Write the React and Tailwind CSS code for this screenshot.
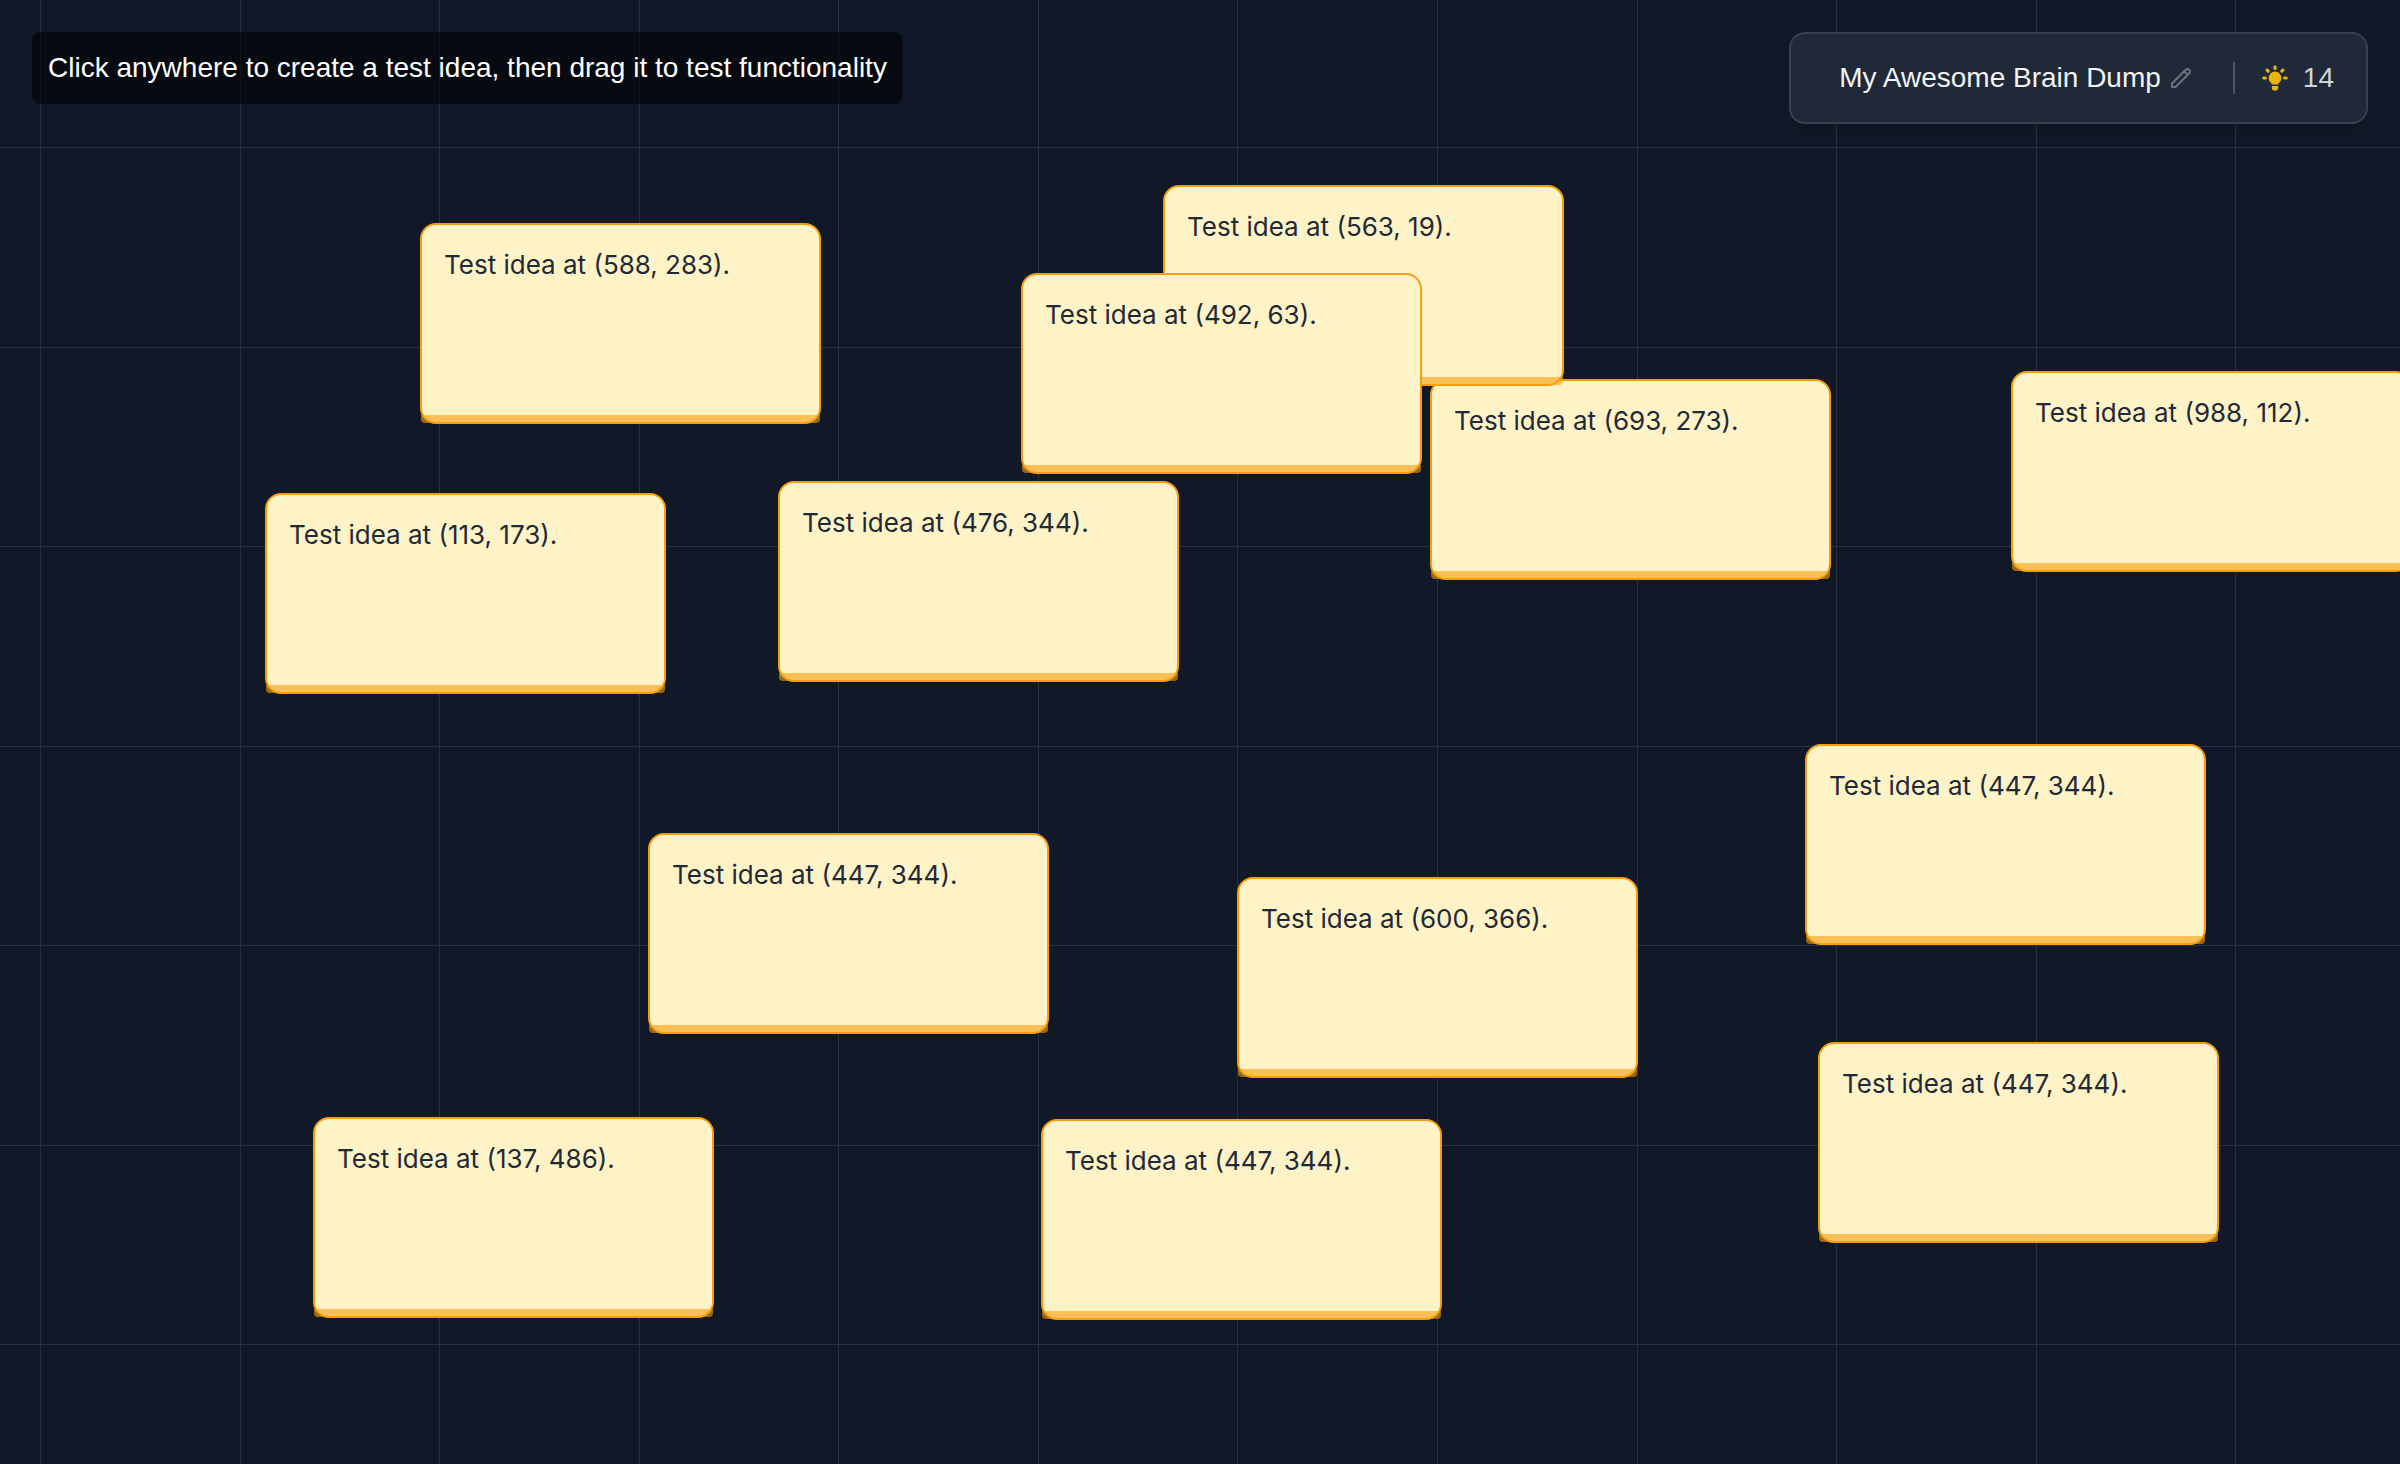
const COLUMNS = [40, 240, 439, 639, 838, 1038, 1237, 1437, 1637, 1836, 2036, 2235];
const ROWS = [147, 347, 546, 746, 945, 1145, 1344];

const IDEAS = [
  { x: 420, y: 223, text: "Test idea at (588, 283)." },
  { x: 1430, y: 379, text: "Test idea at (693, 273)." },
  { x: 1163, y: 185, text: "Test idea at (563, 19)." },
  { x: 1021, y: 273, text: "Test idea at (492, 63)." },
  { x: 2011, y: 371, text: "Test idea at (988, 112)." },
  { x: 265, y: 493, text: "Test idea at (113, 173)." },
  { x: 778, y: 481, text: "Test idea at (476, 344)." },
  { x: 1805, y: 744, text: "Test idea at (447, 344)." },
  { x: 648, y: 833, text: "Test idea at (447, 344)." },
  { x: 1237, y: 877, text: "Test idea at (600, 366)." },
  { x: 1818, y: 1042, text: "Test idea at (447, 344)." },
  { x: 313, y: 1117, text: "Test idea at (137, 486)." },
  { x: 1041, y: 1119, text: "Test idea at (447, 344)." },
];

function Grid() {
  return (
    <svg className="absolute inset-0 h-full w-full" aria-hidden="true">
      {COLUMNS.map((x) => (
        <rect key={x} x={x} y="0" width="1" height="100%" fill="#29313f" />
      ))}
      {ROWS.map((y) => (
        <rect key={y} x="0" y={y} width="100%" height="1" fill="#29313f" />
      ))}
    </svg>
  );
}

function IdeaCard({ x, y, text }) {
  return (
    <article className="absolute h-[201px] w-[401px]" style={{ left: x, top: y }}>
      <div className="h-full rounded-2xl border-2 border-[#f59e0b] bg-[#fef3c7] px-[22px] py-6 font-['Inter',sans-serif] text-[26px] leading-8 text-[#1f2937]">
        {text}
      </div>
      <div className="absolute inset-x-px bottom-px h-2 rounded-b-sm bg-[#f59e0b]/60" />
    </article>
  );
}

function PencilIcon() {
  return (
    <svg className="size-6" viewBox="0 0 24 24" fill="none" stroke="currentColor" strokeWidth="2" strokeLinecap="round" strokeLinejoin="round" aria-hidden="true">
      <path d="M15.232 5.232l3.536 3.536m-2.036-5.036a2.5 2.5 0 113.536 3.536L6.5 21.036H3v-3.572L16.732 3.732z" />
    </svg>
  );
}

function BulbIcon() {
  return (
    <svg className="size-8" viewBox="0 0 20 20" fill="currentColor" aria-hidden="true">
      <path d="M11 3a1 1 0 10-2 0v1a1 1 0 102 0V3zM15.657 5.757a1 1 0 00-1.414-1.414l-.707.707a1 1 0 001.414 1.414l.707-.707zM18 10a1 1 0 01-1 1h-1a1 1 0 110-2h1a1 1 0 011 1zM5.05 6.464A1 1 0 106.464 5.05l-.707-.707a1 1 0 00-1.414 1.414l.707.707zM5 10a1 1 0 01-1 1H3a1 1 0 110-2h1a1 1 0 011 1zM8 16v-1h4v1a2 2 0 11-4 0zM12 14c.015-.34.208-.646.477-.859a4 4 0 10-4.954 0c.27.213.462.519.476.859h4.002z" />
    </svg>
  );
}

export default function App() {
  return (
    <main className="relative flex min-h-screen flex-col overflow-hidden bg-[#111827] p-8 font-['Liberation_Sans',Arial,sans-serif]">
      <Grid />
      {IDEAS.map((idea) => (
        <IdeaCard key={`${idea.x}-${idea.y}`} {...idea} />
      ))}
      <header className="relative flex items-start justify-between">
        <p className="rounded-lg bg-black/55 px-4 py-4 text-[28px] leading-10 text-white">
          Click anywhere to create a test idea, then drag it to test functionality
        </p>
        <div className="flex items-center rounded-2xl border-2 border-[#374151] bg-[#1f2937] px-8 py-6 shadow-lg">
          <button type="button" className="flex items-center gap-2 px-4 text-[28px] leading-10 text-[#f3f4f6]">
            My Awesome Brain Dump
            <span className="text-[#6b7280]"><PencilIcon /></span>
          </button>
          <div className="ml-6 h-8 w-0.5 bg-[#4b5563]" />
          <div className="ml-6 flex items-center gap-3 text-[28px] leading-10 text-[#d1d5db]">
            <span className="text-[#eab308]"><BulbIcon /></span>
            14
          </div>
        </div>
      </header>
    </main>
  );
}
